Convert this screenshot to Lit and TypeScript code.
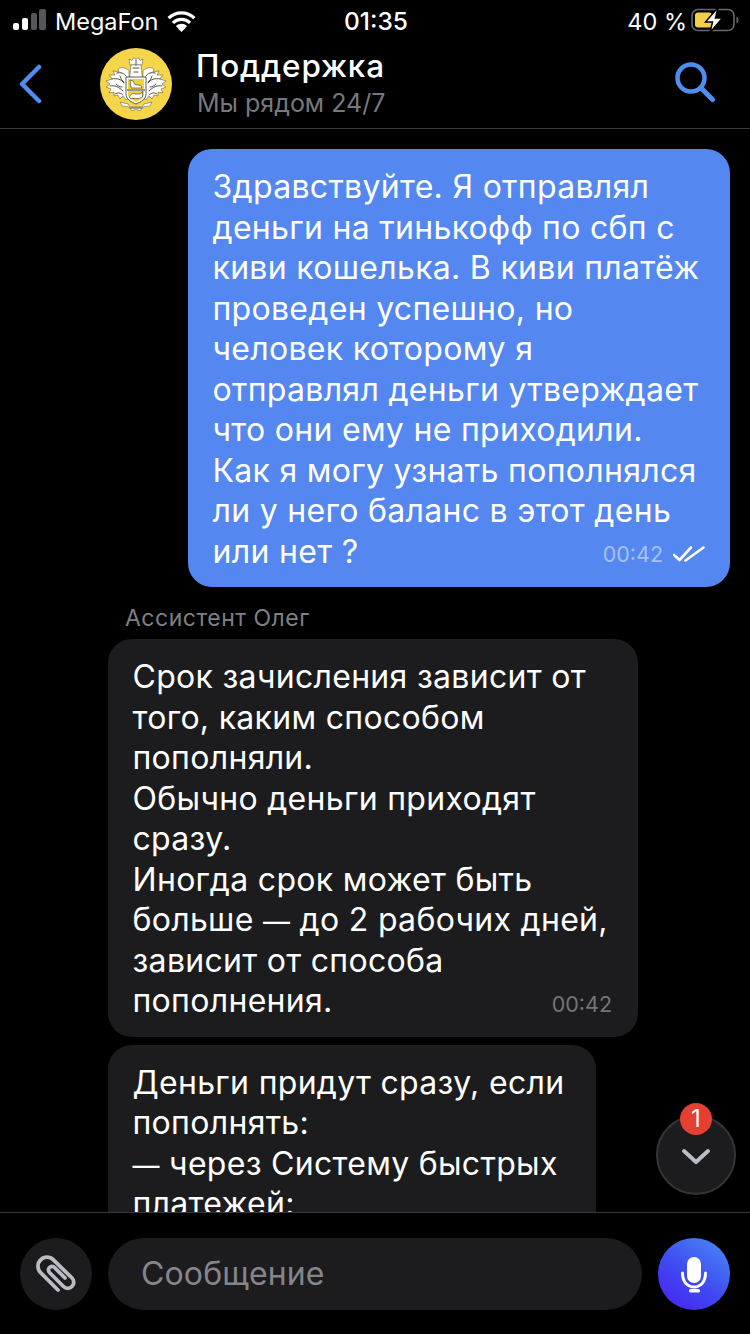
import { LitElement, html, css, svg } from 'lit';
import { customElement } from 'lit/decorators.js';

const outgoing = [
  'Здравствуйте. Я отправлял',
  'деньги на тинькофф по сбп с',
  'киви кошелька. В киви платёж',
  'проведен успешно, но',
  'человек которому я',
  'отправлял деньги утверждает',
  'что они ему не приходили.',
  'Как я могу узнать пополнялся',
  'ли у него баланс в этот день',
];

const firstReply = [
  'Срок зачисления зависит от',
  'того, каким способом',
  'пополняли.',
  'Обычно деньги приходят',
  'сразу.',
  'Иногда срок может быть',
  'больше — до 2 рабочих дней,',
  'зависит от способа',
];

const secondReply = [
  'Деньги придут сразу, если',
  'пополнять:',
  '— через Систему быстрых',
  'платежей:',
];

// tinkoff coat of arms, simplified
const logo = svg`
  <circle cx="36" cy="36" r="36" fill="#f5d64a" />
  <g fill="#fff" stroke="#4a4a3c" stroke-width=".5" stroke-linejoin="round">
    <path d="M30 17l-1-6 3 1.500 2-3 2 2 2-2 2 3 3-1.500-1 6z" />
    <path d="M31 17h10l1.500 14h-13z" />
    <path d="M29 23c-3-3-7-5-11-2l1 3-6-1 2 4-6 0 3 4-6 2 4 3-4 3 5 2-2 4 5-1 0 4 4-1 2 4 3-3 3 4 3-2z" />
    <path d="M43 23c3-3 7-5 11-2l-1 3 6-1-2 4 6 0-3 4 6 2-4 3 4 3-5 2 2 4-5-1 0 4-4-1-2 4-3-3-3 4-3-2z" />
    <path d="M20 54l8 2 2 3h12l2-3 8-2-2 4-7 1-3 4-4-2-4 2-3-4-7-1z" />
  </g>
  <g fill="none" stroke="#3c3c30" stroke-width=".9" stroke-linecap="round">
    <path d="M17 25c4-1 7 0 9 3M12 31c5-1 9 0 12 4M10 38c5-1 9 1 13 5M15 46c3-2 6-1 8 1M20 28c1 3 2 5 4 6M16 36c2 2 4 3 6 3" />
    <path d="M55 25c-4-1-7 0-9 3M60 31c-5-1-9 0-12 4M62 38c-5-1-9 1-13 5M57 46c-3-2-6-1-8 1M52 28c-1 3-2 5-4 6M56 36c-2 2-4 3-6 3" />
    <path d="M33 20h6M34 24h4M36 12v5M30 60h12" />
  </g>
  <path d="M26 29h20v17c0 5-5 8-10 10-5-2-10-5-10-10z" fill="#fff" stroke="#33332a" stroke-width=".8" />
  <path d="M28 31h16v10H28z" fill="#eed23c" />
  <path d="M28 43h16v3c0 4-4 6-8 8-4-2-8-4-8-8z" fill="#eed23c" />
  <path d="M27 42h18" stroke="#33332a" stroke-width="1" />
  <path d="M30 32l3 1 2 3.500 6 1 1 2.500H31z" fill="#fff" stroke="#33332a" stroke-width=".6" />
  <path d="M29.500 49c2-4 4-4 6-3h5l2-2.500v5.500l-3 1.500h-9z" fill="#fff" stroke="#33332a" stroke-width=".6" />
`;

// the em dash in the reference font is narrower than Inter's
const textLine = (text: string) => {
  const [before, after] = text.split('—');
  return after === undefined ? text : html`${before}<span class="dash">—</span>${after}`;
};

@customElement('app-root')
export class AppRoot extends LitElement {
  static styles = css`
    :host {
      display: block;
      width: 750px;
      height: 1334px;
      background: #000;
      color: #fff;
      font-family: Inter, "Liberation Sans", sans-serif;
      overflow: hidden;
    }

    .screen {
      display: flex;
      flex-direction: column;
      height: 1334px;
      position: relative;
    }

    .status {
      height: 40px;
      flex: none;
      display: grid;
      grid-template-columns: 1fr auto 1fr;
      align-items: center;
      padding: 2px 11px 0 13px;
      box-sizing: border-box;
      font-size: 23.5px;
    }

    .status-left,
    .status-right {
      display: flex;
      align-items: center;
    }

    .status-left { gap: 9px; }
    .status-right { justify-content: flex-end; gap: 4px; }
    .battery { margin-top: -3px; }

    .clock {
      font-weight: 500;
      font-size: 24.5px;
    }

    .nav {
      height: 89px;
      flex: none;
      box-sizing: border-box;
      border-bottom: 1px solid #38383a;
      display: flex;
      align-items: center;
      padding: 0 34px 0 18px;
    }

    .back { width: 82px; display: flex; flex: none; }

    .logo { flex: none; width: 72px; height: 72px; margin-right: 25px; }

    .who { flex: 1; display: flex; flex-direction: column; margin-top: 2px; }

    .who .name {
      font-size: 31.5px;
      font-weight: 500;
      line-height: 36px;
      letter-spacing: 0.8px;
      margin-left: -1px;
    }

    .who .sub {
      font-size: 25px;
      line-height: 38px;
      color: #77787f;
    }

    .search { margin-top: -5px; }

    .feed {
      flex: 1;
      min-height: 0;
      overflow: hidden;
      display: flex;
      flex-direction: column;
      padding-top: 20px;
    }

    .bubble {
      box-sizing: border-box;
      border-radius: 24px;
      font-size: 32px;
      letter-spacing: 0.3px;
      line-height: 40.5px;
      padding: 18px 25px 15px 24.500px;
      flex: none;
    }

    .bubble .line { white-space: nowrap; }
    .dash { font-size: 27px; line-height: 1; }

    .out {
      align-self: flex-end;
      width: 542px;
      margin-right: 20px;
      background: #5488f0;
    }

    .in {
      align-self: flex-start;
      margin-left: 108px;
      background: #1c1c1e;
    }

    .reply-one { width: 530px; margin-top: 7px; }
    .reply-two { width: 488px; margin-top: 8px; }

    .author {
      margin: 17px 0 0 125px;
      font-size: 23px;
      letter-spacing: 0.5px;
      line-height: 28px;
      color: #7f7f85;
    }

    .last {
      display: flex;
      justify-content: space-between;
      align-items: flex-end;
    }

    .meta {
      display: flex;
      align-items: center;
      gap: 10px;
      font-size: 21.500px;
      letter-spacing: 0;
      line-height: 36px;
      padding-top: 4px;
    }

    .out .meta { color: #a5c1f5; }
    .in .meta { color: #737378; margin-right: 1px; }

    .composer {
      height: 122px;
      flex: none;
      box-sizing: border-box;
      border-top: 1px solid #38383a;
      display: flex;
      padding: 25px 20px 0;
      background: #000;
      gap: 16px;
    }

    .attach {
      width: 72px;
      height: 72px;
      border-radius: 50%;
      background: #1c1c1e;
      display: flex;
      align-items: center;
      justify-content: center;
      flex: none;
    }

    .input {
      flex: 1;
      height: 72px;
      border-radius: 36px;
      background: #1c1c1e;
      color: #85858b;
      font-size: 32px;
      letter-spacing: 0.15px;
      line-height: 72px;
      padding-left: 33px;
    }

    .mic {
      width: 72px;
      height: 72px;
      border-radius: 50%;
      background: linear-gradient(215deg, #4a8ef5 0%, #3f49f2 55%, #4a1ff0 100%);
      display: flex;
      align-items: center;
      justify-content: center;
      flex: none;
    }

    .to-bottom {
      position: absolute;
      left: 656px;
      top: 1115px;
      width: 80px;
      height: 80px;
      box-sizing: border-box;
      border-radius: 50%;
      background: #1c1c1e;
      border: 2px solid #353537;
      display: flex;
      align-items: center;
      justify-content: center;
    }

    .to-bottom svg { margin-top: 4px; }

    .badge {
      position: absolute;
      left: 680px;
      top: 1103px;
      width: 32px;
      height: 32px;
      border-radius: 50%;
      background: #e53e33;
      font-size: 24px;
      line-height: 32px;
      text-align: center;
    }
  `;

  render() {
    return html`
      <div class="screen">
        <div class="status">
          <div class="status-left">
            <svg width="33" height="28" viewBox="0 0 33 28">
              <rect x="0" y="16" width="6" height="7" rx="2" fill="#fff" />
              <rect x="9" y="11" width="6" height="12" rx="2" fill="#fff" />
              <rect x="18" y="6" width="6" height="17" rx="2" fill="#56565a" />
              <rect x="26" y="2" width="7" height="21" rx="2" fill="#56565a" />
            </svg>
            <span>MegaFon</span>
            <svg width="29" height="21" viewBox="0 0 30 22">
              <path d="M1.500 7.500a19.500 19.500 0 0 1 27 0M6 12.500a13 13 0 0 1 18 0M10.300 17a6.500 6.500 0 0 1 9.400 0" fill="none" stroke="#fff" stroke-width="3.400" />
              <path d="M15 22l-4-4a6 6 0 0 1 8 0z" fill="#fff" />
            </svg>
          </div>
          <div class="clock">01:35</div>
          <div class="status-right">
            <span>40 %</span>
            <svg class="battery" width="48" height="26" viewBox="0 0 48 26">
              <rect x="1" y="2.500" width="42" height="21" rx="6" fill="none" stroke="#68686a" stroke-width="1.600" />
              <rect x="4" y="5.500" width="17" height="15" rx="3" fill="#f5cf47" />
              <path d="M45.500 9.500c1.500.5 2 2 2 3.500s-.5 3-2 3.500z" fill="#68686a" />
              <path d="M27 .5L14.500 15h7l-2.500 10.500L31.500 11h-7z" fill="#fff" stroke="#000" stroke-width="1.500" />
            </svg>
          </div>
        </div>

        <div class="nav">
          <div class="back">
            <svg width="24" height="40" viewBox="0 0 24 40">
              <path d="M21 3L4 20l17 17" fill="none" stroke="#4f8ef0" stroke-width="4.500" stroke-linecap="round" stroke-linejoin="round" />
            </svg>
          </div>
          <svg class="logo" viewBox="0 0 72 72">${logo}</svg>
          <div class="who">
            <div class="name">Поддержка</div>
            <div class="sub">Мы рядом 24/7</div>
          </div>
          <svg class="search" width="42" height="42" viewBox="0 0 42 42">
            <circle cx="17" cy="17" r="13.500" fill="none" stroke="#4f8ef0" stroke-width="4.500" />
            <path d="M27 27l11.500 11.500" fill="none" stroke="#4f8ef0" stroke-width="5" stroke-linecap="round" />
          </svg>
        </div>

        <div class="feed">
          <div class="bubble out">
            ${outgoing.map((l) => html`<div class="line">${textLine(l)}</div>`)}
            <div class="line last">
              <span>или нет ?</span>
              <span class="meta">
                00:42
                <svg width="32" height="16" viewBox="0 0 32 16">
                  <path d="M1 9l5.500 5L18 1.500M12.500 14.500L30.500 1.500" fill="none" stroke="#fff" stroke-width="2.600" stroke-linecap="round" stroke-linejoin="round" />
                </svg>
              </span>
            </div>
          </div>

          <div class="author">Ассистент Олег</div>

          <div class="bubble in reply-one">
            ${firstReply.map((l) => html`<div class="line">${textLine(l)}</div>`)}
            <div class="line last">
              <span>пополнения.</span>
              <span class="meta">00:42</span>
            </div>
          </div>

          <div class="bubble in reply-two">
            ${secondReply.map((l) => html`<div class="line">${textLine(l)}</div>`)}
          </div>
        </div>

        <div class="composer">
          <div class="attach">
            <svg width="44" height="44" viewBox="0 0 44 44">
              <path d="M24 38L6.600 20.600A9 9 0 0 1 19.400 7.800L38 26A6 6 0 0 1 29.500 34.500L15.500 20.500A3.500 3.500 0 0 1 20.500 15.500L31 26" fill="none" stroke="#b9bcc3" stroke-width="3.800" stroke-linecap="round" />
            </svg>
          </div>
          <div class="input">Сообщение</div>
          <div class="mic">
            <svg width="30" height="48" viewBox="0 0 30 48">
              <rect x="8" y="7" width="14" height="26" rx="7" fill="#fff" />
              <path d="M3.500 23c0 9 5 14 11.500 14s11.500-5 11.500-14" fill="none" stroke="#fff" stroke-width="3" stroke-linecap="round" />
              <rect x="10" y="39" width="11" height="3.500" rx="1.500" fill="#fff" />
            </svg>
          </div>
        </div>

        <div class="to-bottom">
          <svg width="32" height="20" viewBox="0 0 32 20">
            <path d="M4 4l12 11L28 4" fill="none" stroke="#b9bdc6" stroke-width="4" stroke-linecap="round" stroke-linejoin="round" />
          </svg>
        </div>
        <div class="badge">1</div>
      </div>
    `;
  }
}
